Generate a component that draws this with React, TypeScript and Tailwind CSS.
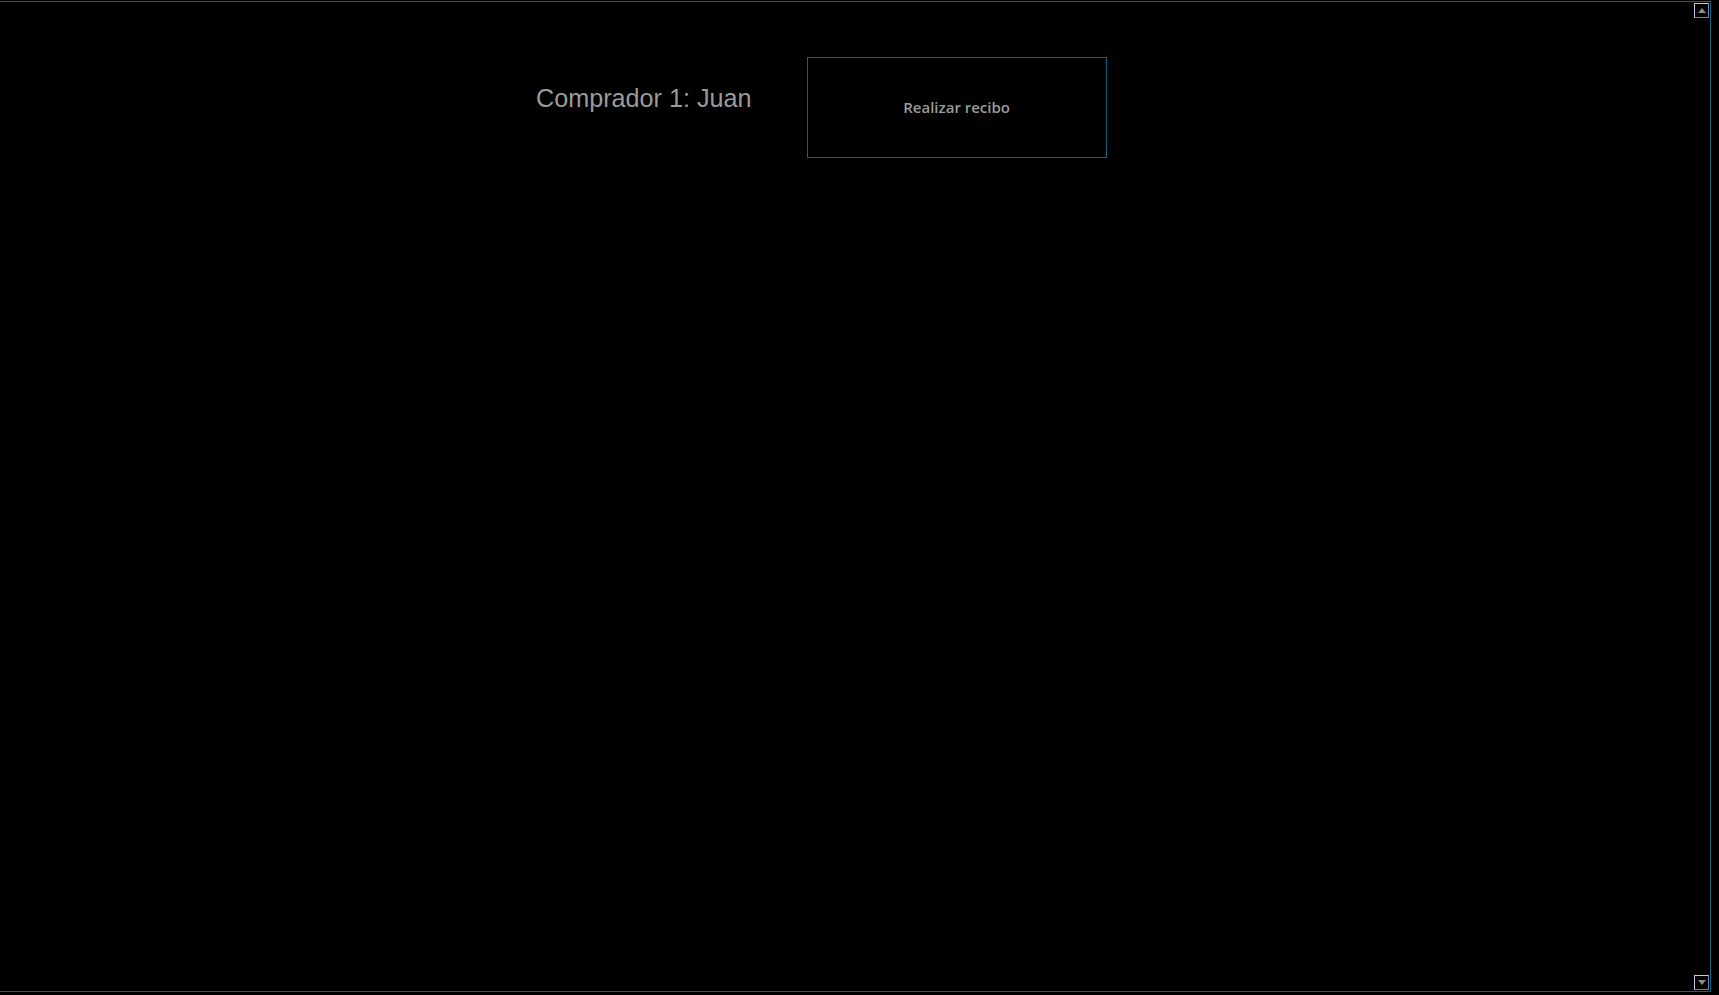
export default function App() {
  return (
    <div className="h-[995px] w-full overflow-hidden bg-black" style={{ fontFamily: "'Liberation Sans', Arial, sans-serif" }}>
      <div className="mt-px flex h-[991px] w-[1711px] border-t border-r border-b border-[#1a5e80]">
        {/* content */}
        <div className="flex flex-1 items-start pl-[536px] pt-[55px]">
          <div className="mt-[26px] text-[25.2px] leading-[30px] text-[#9a9a9a]">Comprador 1: Juan</div>
          <button className="ml-[55px] flex h-[101px] w-[300px] items-center justify-center border border-[#1a5e80] bg-black text-[15px] font-semibold text-[#9a9a9a]" style={{ fontFamily: "'Open Sans', sans-serif" }}>
            Realizar recibo
          </button>
        </div>

        {/* scrollbar */}
        <div className="flex w-[16px] flex-col justify-between pb-[1px] pt-[1px]">
          <div className="flex h-[15px] w-[15px] items-center justify-center border border-t-[#c0c8e0] border-l-[#c0c8e0] border-r-[#7080b0] border-b-[#7080b0]">
            <svg width="8" height="5" viewBox="0 0 8 5"><path d="M4 0 L8 5 L0 5 Z" fill="#8a8a8a" /></svg>
          </div>
          <div className="flex h-[15px] w-[15px] items-center justify-center border border-t-[#c0c8e0] border-l-[#c0c8e0] border-r-[#7080b0] border-b-[#7080b0]">
            <svg width="8" height="5" viewBox="0 0 8 5"><path d="M0 0 L8 0 L4 5 Z" fill="#8a8a8a" /></svg>
          </div>
        </div>
      </div>
    </div>
  );
}
